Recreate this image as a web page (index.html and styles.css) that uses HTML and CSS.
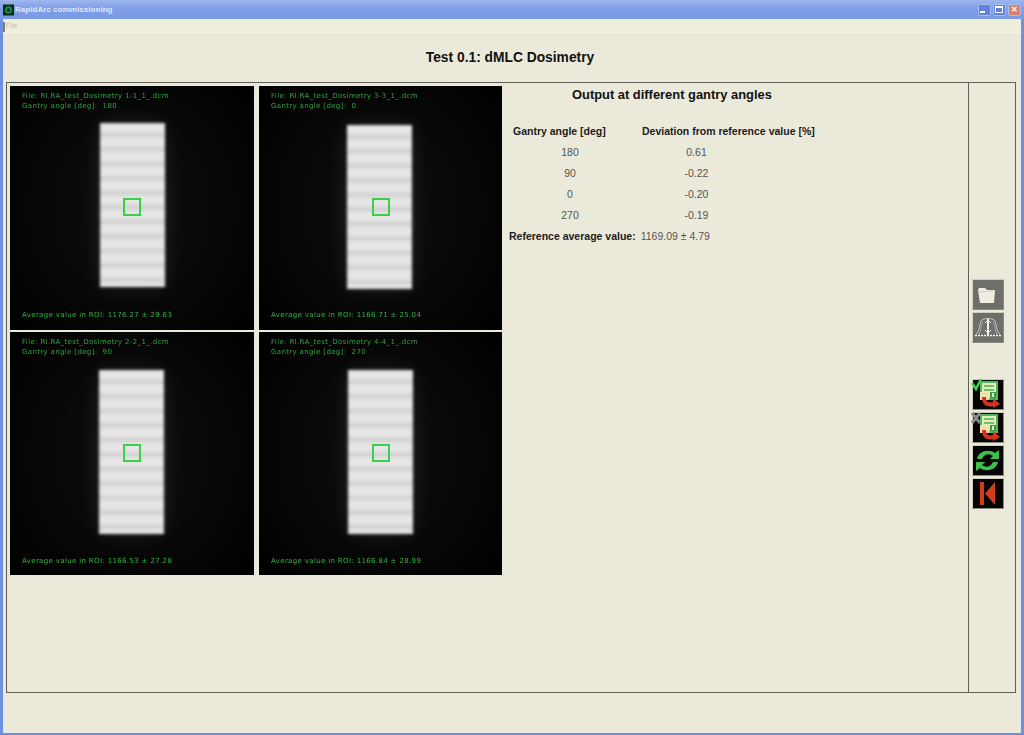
FILE: index.html
```html
<!DOCTYPE html>
<html lang="en">
<head>
    <meta charset="UTF-8">
    <title>RapidArc commissioning</title>
    <link rel="stylesheet" href="styles.css">
</head>
<body>
    <div class="window">
        <div class="titlebar">
            <svg class="app-icon" viewBox="0 0 12 12"><rect width="12" height="12" fill="#0a2a1a"/><circle cx="6" cy="6" r="4" fill="#1f8a4a"/><circle cx="6" cy="6" r="2" fill="#0a3a20"/></svg>
            <span class="app-title">RapidArc commissioning</span>
            <div class="win-buttons">
                <div class="win-btn"><span class="min-mark"></span></div>
                <div class="win-btn"><span class="max-mark"></span></div>
                <div class="win-btn close">✕</div>
            </div>
        </div>
        <div class="menubar"><span class="menu-grip"></span><span class="menu-item">File</span></div>
        <h1 class="test-title">Test 0.1: dMLC Dosimetry</h1>
        <div class="panels">
            <div class="main-panel">
                <div class="images">
                    <div class="dicom">
                        <div class="info">File: RI.RA_test_Dosimetry 1-1_1_.dcm<br>Gantry angle [deg]: &nbsp;180</div>
                        <div class="field f1"></div>
                        <div class="roi"></div>
                        <div class="average">Average value in ROI: 1176.27 ± 29.63</div>
                    </div>
                    <div class="dicom">
                        <div class="info">File: RI.RA_test_Dosimetry 3-3_1_.dcm<br>Gantry angle [deg]: &nbsp;0</div>
                        <div class="field f2"></div>
                        <div class="roi"></div>
                        <div class="average">Average value in ROI: 1166.71 ± 25.04</div>
                    </div>
                    <div class="dicom lower">
                        <div class="info">File: RI.RA_test_Dosimetry 2-2_1_.dcm<br>Gantry angle [deg]: &nbsp;90</div>
                        <div class="field f3"></div>
                        <div class="roi"></div>
                        <div class="average">Average value in ROI: 1166.53 ± 27.28</div>
                    </div>
                    <div class="dicom lower">
                        <div class="info">File: RI.RA_test_Dosimetry 4-4_1_.dcm<br>Gantry angle [deg]: &nbsp;270</div>
                        <div class="field f4"></div>
                        <div class="roi"></div>
                        <div class="average">Average value in ROI: 1166.84 ± 28.99</div>
                    </div>
                </div>
                <div class="results">
                    <h2 class="results-title">Output at different gantry angles</h2>
                    <div class="results-table">
                        <b class="col-angle">Gantry angle [deg]</b><b class="col-dev">Deviation from reference value [%]</b>
                        <span class="cell-angle">180</span><span class="cell-dev">0.61</span>
                        <span class="cell-angle">90</span><span class="cell-dev">-0.22</span>
                        <span class="cell-angle">0</span><span class="cell-dev">-0.20</span>
                        <span class="cell-angle">270</span><span class="cell-dev">-0.19</span>
                    </div>
                    <div class="reference"><b>Reference average value:</b><span>1169.09 ± 4.79</span></div>
                </div>
            </div>
            <div class="side-panel">
                <div class="tool disabled">
                    <svg viewBox="0 0 30 29"><path d="M5 10 L6 8 H12 L14 10 H22 L21 23 H7 Z" fill="#efece0"/><path d="M6 12 L21 11" stroke="#cfcdc4" fill="none"/></svg>
                </div>
                <div class="tool disabled">
                    <svg viewBox="0 0 30 29" fill="none" stroke="#c8c6bc"><path d="M3 21 C7 20 6 9 9 7 C11 5 19 5 21 7 C24 9 23 20 27 21"/><path d="M6 21 C8 19 8 11 10 9 M24 21 C22 19 22 11 20 9" stroke="#a8a69e"/><path d="M2 22.500 H28" stroke="#f4f2ea" stroke-width="1.500" stroke-dasharray="2 1"/><path d="M15 6 V22" stroke="#f4f2ea" stroke-width="2"/><path d="M12 10 L15 7 L18 10 M12 17 L15 20 L18 17" stroke="#f4f2ea"/></svg>
                </div>
                <div class="tool tool-gap">
                    <svg viewBox="0 0 30 29"><rect x="7" y="1" width="18" height="19" fill="#4fb85a"/><rect x="9" y="3" width="14" height="15" fill="#e4ecb8"/><rect x="11" y="5" width="10" height="2" fill="#6cc070"/><rect x="11" y="9" width="10" height="2" fill="#6cc070"/><rect x="17" y="12" width="6" height="6" fill="#3a9a4a"/><rect x="19" y="13" width="2" height="4" fill="#e4ecb8"/><rect x="7" y="12" width="9" height="8" fill="#f2e2b0"/><path d="M-1 3 L3 9 L8 -1" stroke="#3fd04a" stroke-width="2.500" fill="none"/><path d="M11 17 C11 25 16 25 21 24" stroke="#d8301c" stroke-width="4" fill="none"/><path d="M20 18 L27 24 L20 28 Z" fill="#d8301c"/></svg>
                </div>
                <div class="tool">
                    <svg viewBox="0 0 30 29"><rect x="7" y="1" width="18" height="19" fill="#4fb85a"/><rect x="9" y="3" width="14" height="15" fill="#e4ecb8"/><rect x="11" y="5" width="10" height="2" fill="#6cc070"/><rect x="11" y="9" width="10" height="2" fill="#6cc070"/><rect x="17" y="12" width="6" height="6" fill="#3a9a4a"/><rect x="19" y="13" width="2" height="4" fill="#e4ecb8"/><rect x="7" y="12" width="9" height="8" fill="#f2e2b0"/><path d="M-1 0 L7 10 M7 0 L-1 10" stroke="#8a8a8a" stroke-width="3" fill="none"/><path d="M11 17 C11 25 16 25 21 24" stroke="#d8301c" stroke-width="4" fill="none"/><path d="M20 18 L27 24 L20 28 Z" fill="#d8301c"/></svg>
                </div>
                <div class="tool">
                    <svg viewBox="0 0 30 29" fill="#3cc24a"><path d="M4 13 C5 6 15 2 22 7 L26 4 V13 H17 L20 10 C16 7 11 8 9 13 Z"/><path d="M25 16 C24 23 14 27 7 22 L3 25 V16 H12 L9 19 C13 22 18 21 20 16 Z"/></svg>
                </div>
                <div class="tool">
                    <svg viewBox="0 0 30 29" fill="#d23c1c"><rect x="7" y="3" width="4" height="23"/><path d="M22 3 V26 L12 14.500 Z"/></svg>
                </div>
            </div>
        </div>
    </div>
</body>
</html>
```

FILE: styles.css
```css
* {
    margin: 0;
    padding: 0;
    box-sizing: border-box;
}

html, body {
    width: 1024px;
    height: 735px;
    overflow: hidden;
}

body {
    font-family: "Liberation Sans", Arial, sans-serif;
    background: #ebe9d9;
}

.window {
    width: 1024px;
    height: 735px;
    border-left: 3px solid #6f8fe4;
    border-right: 3px solid #6f8fe4;
    border-bottom: 2px solid #6f8fe4;
    display: flex;
    flex-direction: column;
}

.titlebar {
    height: 19px;
    margin: 0 -3px;
    padding: 0 3px 0 3px;
    background: linear-gradient(180deg, #9db6ee 0%, #7f9ee8 45%, #7b9ae4 100%);
    display: flex;
    align-items: center;
    flex: none;
}

.app-icon {
    width: 11px;
    height: 12px;
    margin-right: 1px;
}

.app-title {
    color: #dfe8fa;
    font-size: 8px;
    font-weight: bold;
    letter-spacing: 0.05px;
}

.win-buttons {
    margin-left: auto;
    display: flex;
    gap: 2px;
}

.win-btn {
    width: 13px;
    height: 12px;
    background: #5f83dc;
    border: 1px solid #a9bcec;
    border-radius: 2px;
    color: #fff;
    font-size: 8px;
    line-height: 10px;
    text-align: center;
}

.win-btn.close {
    background: #d9806a;
    font-weight: bold;
}

.min-mark {
    display: block;
    width: 5px;
    height: 2px;
    background: #fff;
    margin: 6px 0 0 1px;
}

.max-mark {
    display: block;
    width: 8px;
    height: 7px;
    border: 1px solid #fff;
    border-top-width: 2px;
    margin: 1px 0 0 1px;
}

.menubar {
    height: 14px;
    flex: none;
    display: flex;
    align-items: center;
    border-bottom: 1px solid #f6f4e9;
    background: #efeddc;
}

.menu-grip {
    width: 2px;
    height: 10px;
    background: #7e7c6c;
    margin-top: 2px;
}

.menu-item {
    font-size: 7px;
    color: #c2c0b0;
    margin-left: 1px;
}

.test-title {
    height: 49px;
    flex: none;
    padding: 17px 4px 0 0;
    font-size: 13.800px;
    line-height: 16px;
    font-weight: bold;
    text-align: center;
    color: #111;
}

.panels {
    margin: 0 6px 0 3px;
    height: 611px;
    flex: none;
    display: flex;
}

.main-panel {
    width: 963px;
    flex: none;
    border: 1px solid #5f5e55;
    padding: 3px;
    display: flex;
    gap: 6px;
    align-items: flex-start;
}

.images {
    display: grid;
    grid-template-columns: 244px 243px;
    grid-template-rows: 244px 243px;
    column-gap: 5px;
    row-gap: 2px;
}

.dicom {
    position: relative;
    overflow: hidden;
    background: radial-gradient(ellipse 65% 75% at 50% 50%, #101010 0%, #060606 60%, #000 100%);
    color: #2fa53c;
    font-family: "DejaVu Sans", sans-serif;
    font-size: 7px;
    letter-spacing: 0.35px;
}

.info {
    position: absolute;
    left: 12px;
    top: 6px;
    line-height: 9.500px;
    white-space: nowrap;
    filter: blur(0.3px);
}

.average {
    position: absolute;
    left: 12px;
    bottom: 10px;
    line-height: 9px;
    white-space: nowrap;
    color: #35b545;
    filter: blur(0.3px);
}

.lower .average {
    bottom: 9px;
}

.field {
    position: absolute;
    width: 65px;
    height: 164px;
    filter: blur(1.5px);
    background: repeating-linear-gradient(180deg, #e0e0e0 0, #e8e8e8 5px, #e0e0e0 9px, #cdcdcd 12px, #e0e0e0 14.500px);
    box-shadow: 0 0 20px rgba(255, 255, 255, 0.1);
}

.f1 { left: 90px; top: 37px; }
.f2 { left: 88px; top: 39px; }
.f3 { left: 89px; top: 38px; }
.f4 { left: 89px; top: 38px; }

.roi {
    position: absolute;
    left: 113px;
    top: 112px;
    width: 18px;
    height: 18px;
    border: 2px solid #3ad04a;
}

.results {
    width: 330px;
    font-size: 10.500px;
    color: #555;
}

.results-title {
    font-size: 12.900px;
    line-height: 15px;
    padding: 1px 0 0 64px;
    margin-bottom: 18px;
    color: #111;
    white-space: nowrap;
}

.results-table {
    display: grid;
    grid-template-columns: 124px 220px;
    grid-auto-rows: 21px;
    align-items: center;
    margin-left: 5px;
}

.results-table b {
    color: #1c1c1c;
    white-space: nowrap;
}

.col-dev {
    padding-left: 5px;
}

.cell-angle {
    width: 114px;
    text-align: center;
}

.cell-dev {
    width: 119px;
    text-align: center;
}

.reference {
    display: flex;
    gap: 5px;
    height: 21px;
    align-items: center;
    margin-left: 1px;
    white-space: nowrap;
}

.reference b {
    color: #1c1c1c;
}

.side-panel {
    width: 47px;
    flex: none;
    border: 1px solid #5f5e55;
    border-left: 0;
    padding: 196px 0 0 3px;
    display: flex;
    flex-direction: column;
    gap: 2px;
}

.tool {
    width: 32px;
    height: 31px;
    background: #050505;
    border: 1px solid #d0cec0;
    border-right-color: #8c8a7e;
    border-bottom-color: #8c8a7e;
}

.tool svg {
    display: block;
    width: 30px;
    height: 29px;
    overflow: visible;
    filter: blur(0.4px);
}

.tool.disabled {
    background: #6e6e6a;
}

.tool-gap {
    margin-top: 34px;
}
```
